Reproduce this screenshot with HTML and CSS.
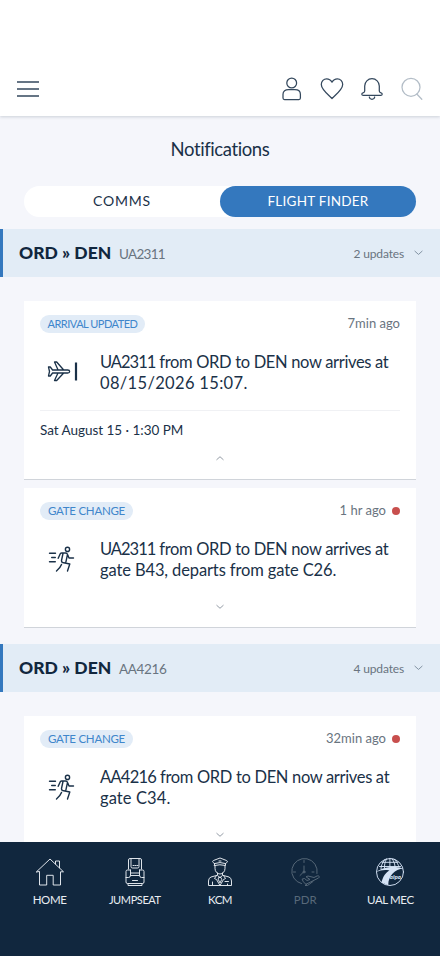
FILE: index.html
```html
<!DOCTYPE html>
<html lang="en">
<head>
<meta charset="utf-8">
<meta name="viewport" content="width=device-width, initial-scale=1">
<title>Notifications</title>
<link rel="stylesheet" href="styles.css">
</head>
<body>
<svg class="defs" width="0" height="0" aria-hidden="true">
  <symbol id="runner" viewBox="0 0 28 28">
    <circle cx="20.5" cy="4.4" r="2.1"/>
    <path d="M2.5 8.3h6M4.700 12.500h3.600M2.500 16.700h5.800M11.200 13.300 13.300 8.700Q13.800 8 14.700 8H18.500Q20 8 20.600 9.600L22 13H26.500M16 8.500 14.500 15.500Q14.300 17 15.600 17.500L22.800 19 20.500 26M20.400 10 18.700 17.800M14.500 19.500Q13.500 22.500 9.500 26"/>
  </symbol>
  <symbol id="down" viewBox="0 0 10 6"><path d="m1 1 4 3.600L9 1"/></symbol>
</svg>
<div class="app">
  <header class="topbar">
    <svg class="icon menu" width="24" height="24" viewBox="0 0 24 24"><path d="M1 5h22M1 12h22M1 19h22"/></svg>
    <div class="actions">
      <svg class="icon" width="24" height="24" viewBox="0 0 24 24"><circle cx="11.700" cy="6" r="4.900"/><path d="M3 21v-3.700c0-3.300 2.400-4.800 5.500-4.800h6.400c3.100 0 5.500 1.500 5.500 4.800V21q0 1.500-1.500 1.500H4.500Q3 22.500 3 21Z"/></svg>
      <svg class="icon" width="24" height="24" viewBox="0 0 24 24"><path d="M12 21.500C8 17.500 1.300 12.500 1.300 7.500c0-3.300 2.500-5.700 5.300-5.700 2.500 0 4.300 1.400 5.400 3.400 1.100-2 2.900-3.400 5.400-3.400 2.800 0 5.300 2.400 5.300 5.700 0 5-6.700 10-10.700 14Z"/></svg>
      <svg class="icon" width="24" height="24" viewBox="0 0 24 24"><path d="M4.700 9a7.300 7.300 0 0 1 14.600 0v5q0 1.500 1.700 1.800c1.700.4 1.500 2.500-.2 2.500H3.200c-1.700 0-1.900-2.100-.2-2.500Q4.700 15.500 4.700 14ZM9.300 20c.5 3 4.900 3 5.400 0"/></svg>
      <svg class="icon muted" width="24" height="24" viewBox="0 0 24 24"><circle cx="11" cy="10.300" r="9"/><path d="m16.800 17 5 5.300"/></svg>
    </div>
  </header>
  <main>
    <h1>Notifications</h1>
    <div class="tabs"><span class="tab comms">COMMS</span><span class="tab active">FLIGHT FINDER</span></div>

    <section>
      <div class="group"><strong>ORD » DEN</strong><span class="flight">UA2311</span><span class="count">2 updates</span><svg class="chev" width="9" height="6"><use href="#down"/></svg></div>
      <div class="cards">
        <article class="card open">
          <div class="meta"><span class="tag arrival">ARRIVAL UPDATED</span><span class="time first">7min ago</span></div>
          <div class="content">
            <svg class="event" width="32" height="28" viewBox="0 0 32 28"><path d="M2.500 10h1.800l2.300 3h5.500L8.500 5h2.200l7 8h4c2.600 0 2.600 3 0 3h-4l-7 7.500H8.500L12 16H6.600l-2.300 3H2.500l1-4.500ZM12 13h5.700M12 16h5.700"/><path class="bar" d="M30 5.500v18"/></svg>
            <p><span class="l1"><span class="ua">UA2311</span> from ORD to DEN now arrives at</span><br><span class="l2">08/15/2026 15:07.</span></p>
          </div>
          <div class="date"><span>Sat August 15 · 1:30 PM</span></div>
          <svg class="toggle up" width="8" height="6"><use href="#down"/></svg>
        </article>
        <article class="card closed">
          <div class="meta"><span class="tag">GATE CHANGE</span><span class="time">1 hr ago</span><i class="dot"></i></div>
          <div class="content">
            <svg class="event run" width="28" height="28"><use href="#runner"/></svg>
            <p><span class="l1"><span class="ua">UA2311</span> from ORD to DEN now arrives at</span><br><span class="l3">gate B43, departs from gate C26.</span></p>
          </div>
          <svg class="toggle" width="8" height="6"><use href="#down"/></svg>
        </article>
      </div>
    </section>

    <section>
      <div class="group"><strong>ORD » DEN</strong><span class="flight aa-flight">AA4216</span><span class="count">4 updates</span><svg class="chev" width="9" height="6"><use href="#down"/></svg></div>
      <div class="cards">
        <article class="card closed">
          <div class="meta"><span class="tag">GATE CHANGE</span><span class="time">32min ago</span><i class="dot"></i></div>
          <div class="content">
            <svg class="event run" width="28" height="28"><use href="#runner"/></svg>
            <p><span class="l1"><span class="aa">AA4216</span> from ORD to DEN now arrives at</span><br><span class="l4">gate C34.</span></p>
          </div>
          <svg class="toggle" width="8" height="6"><use href="#down"/></svg>
        </article>
      </div>
    </section>
  </main>
  <nav class="bottom">
    <div class="item">
      <svg width="30" height="30" viewBox="0 0 30 30"><path d="M1.500 14.800 15 2l13.500 12.800h-3V28h-7.300V18.300h-6.500V28H4.500V14.800ZM20.500 7V4h4v6.800"/></svg>
      <span class="home">HOME</span>
    </div>
    <div class="item">
      <svg width="30" height="30" viewBox="0 0 30 30"><path d="M8.500 12V3q0-1.500 1.500-1.500h10q1.500 0 1.500 1.500v9M11 2v7.500q0 1.500 1.500 1.500h5q1.500 0 1.500-1.500V2M13 8.500h1m1 0h1m1 0h1M10.500 13v5.500h9V13M10.500 16h9M10.500 13H7.500Q6 13 6 14.500V25q0 1.500 1.500 1.500h15q1.500 0 1.500-1.500V14.500Q24 13 22.500 13h-3M12.500 23.500h5M8 26.500v2h14v-2M6 20.500h2.500q2 0 2-2M24 20.500h-2.500q-2 0-2-2"/></svg>
      <span class="jump">JUMPSEAT</span>
    </div>
    <div class="item">
      <svg width="30" height="30" viewBox="0 0 30 30"><path d="M9.500 6.500C7.500 5.500 7 4 8.500 3.500L15 1l6.500 2.500c1.500.5 1 2-1 3v2q-5.500-1.500-11 0ZM9.500 6.500q5.500-2 11 0M14 4h2M10 8.500v3c0 3 2.300 5.500 5 5.500s5-2.500 5-5.500v-3M12.500 16v2.500L15 20.500l2.500-2V16M11.500 18.500 6 20q-2.500 1-2.500 4v4.500h23V24q0-3-2.500-4l-5.500-1.500M11.500 18.500l-2 3 2 1L15 28.500l3.500-6 2-1-2-3M14 20.500h2l.7 2L15 26l-1.700-3.500ZM20 24.500h3.500M7.500 25v3m15-1v1"/></svg>
      <span class="kcm">KCM</span>
    </div>
    <div class="item disabled">
      <svg width="30" height="30" viewBox="0 0 30 30"><path d="M11.500 26.600A12.700 12.700 0 1 1 27 16.500M14 3.500v2M3.500 15h2M22 15h2M14 9v5.500l-4 4"/><circle cx="14" cy="15" r="1"/><path d="m12.500 22 2-.5 2.500 2 3-1-4-2.700 2-.8 6 1.500 3-1.500c2-.8 3.200 1 1.500 2L16 27.300 13.500 25ZM17 27l-2 1.500h2.500l5.500-4"/></svg>
      <span class="pdr">PDR</span>
    </div>
    <div class="item">
      <svg class="globe" width="30" height="30" viewBox="0 0 30 30"><path d="M4.500 9.500h21M7 5.300h16M10 2.500C7 6 6 9 6 12M14.900 1.300V10M19 2c3 3 4.500 6 5 8M11.500 1.800C9.500 6 9.500 8 9.500 11M17 1.500c2 3 3 6 3 8"/><circle cx="15" cy="15" r="13.500"/><path class="fill" d="M1.500 15C7 10.500 18 8.500 28.300 11.500 20 12.500 13.500 18 13.200 28.200L6.500 25.500C8 19 11 15.500 14.500 13.500 9 12.500 5 13.500 1.500 15Z"/><text x="14.800" y="21.500">alpa</text></svg>
      <span class="ual">UAL MEC</span>
    </div>
  </nav>
</div>
</body>
</html>
```
FILE: styles.css
```css
* { box-sizing: border-box; }
body {
  margin: 0;
  background: #f5f6fb;
  color: #1a3148;
  font-family: Lato, sans-serif;
}
.defs { display: block; height: 0; }
svg { fill: none; stroke: currentColor; stroke-linecap: round; stroke-linejoin: round; flex: none; }
.app { height: 956px; display: flex; flex-direction: column; overflow: hidden; }
.topbar {
  height: 116px;
  flex: none;
  padding: 61px 16px 0;
  background: #fff;
  box-shadow: 0 1px 3px #11273e2e;
  display: flex;
  align-items: center;
  justify-content: space-between;
  z-index: 1;
}
.icon { stroke-width: 1.25; color: #34485d; }
.menu { stroke-width: 1.4; stroke-linecap: butt; }
.actions { display: flex; gap: 16px; }
.muted { color: #b3bdc7; }
main { flex: 1; min-height: 0; overflow: hidden; }
h1 {
  margin: 0;
  padding-top: 20px;
  height: 70px;
  text-align: center;
  font-size: 18.500px;
  line-height: 26px;
  font-weight: 400;
  letter-spacing: -.4px;
}
.tabs {
  height: 31px;
  margin: 0 24px 12px;
  display: flex;
  background: #fff;
  border-radius: 16px;
}
.tab { flex: 1; text-align: center; font-size: 14px; line-height: 30px; letter-spacing: .8px; }
.active { background: #3478be; color: #fff; border-radius: 16px; font-size: 13.500px; letter-spacing: .25px; }
.group {
  height: 48px;
  display: flex;
  align-items: center;
  padding: 0 17px 0 16px;
  border-left: 3px solid #3478be;
  background: #e2ecf6;
}
.group strong { font-size: 17.500px; line-height: 20px; font-weight: 900; width: 100px; padding-bottom: 1px; white-space: nowrap; color: #11273e; }
.flight { font-size: 13.500px; letter-spacing: -.7px; color: #697480; padding-top: 1px; }
.aa-flight { letter-spacing: -.35px; }
.count { margin-left: auto; font-size: 12px; letter-spacing: -.15px; color: #697480; }
.chev { margin-left: 10px; color: #78899a; }
.cards { display: flex; flex-direction: column; gap: 8px; padding: 24px 24px 16px; }
.card {
  padding: 14px 16px 0;
  background: #fff;
  border-bottom: 1px solid #d0d4da;
  display: flex;
  flex-direction: column;
}
.open { height: 179px; }
.closed { height: 140px; }
.meta { display: flex; align-items: center; height: 18px; }
.tag {
  height: 18px;
  width: 93px;
  text-align: center;
  border-radius: 9px;
  background: #e2ecf7;
  color: #4086cb;
  font-size: 11.500px;
  letter-spacing: -.25px;
  line-height: 18px;
  white-space: nowrap;
}
.arrival { width: 105px; font-size: 11px; letter-spacing: -.5px; }
.time { margin-left: auto; font-size: 13px; line-height: 16px; padding-bottom: 2px; color: #697480; }
.dot { width: 8px; height: 8px; margin-left: 6px; border-radius: 50%; background: #c84f4d; }
.content { height: 77px; display: flex; padding-top: 18px; }
.event { margin: 6px 0 0 6px; width: 32px; stroke-width: 1.3; }
.bar { stroke-width: 2.2; stroke-linecap: butt; }
.run { width: 28px; margin: 7px 3px 0 7px; stroke-width: 1.4; }
.content p { margin: 1px 0 0 22px; font-size: 16.500px; line-height: 21px; white-space: nowrap; }
.l1 { letter-spacing: -.33px; }
.ua { letter-spacing: -1px; }
.aa { letter-spacing: -.75px; }
.l2 { letter-spacing: .33px; }
.l3 { letter-spacing: -.12px; }
.l4 { letter-spacing: .1px; }
.date { height: 40px; border-top: 1px solid #f0f1f4; font-size: 13.500px; letter-spacing: -.03px; line-height: 38px; }
.toggle { margin: 8px auto 0; width: 8px; color: #78838f; }
.closed .toggle { margin-top: 7px; }
.up { margin-top: 5px; transform: rotate(180deg); }
.bottom {
  height: 114px;
  flex: none;
  display: flex;
  padding: 15px 7px 0;
  background: #11273e;
  color: #e9edf2;
}
.item {
  flex: 1;
  display: flex;
  flex-direction: column;
  align-items: center;
  font-size: 11.500px;
  line-height: 16px;
  white-space: nowrap;
}
.item svg { stroke-width: .95; }
.item span { margin-top: 5px; }
.home { letter-spacing: -.4px; }
.jump { font-size: 11px; letter-spacing: -.4px; }
.kcm { letter-spacing: -.5px; }
.ual { letter-spacing: -.4px; }
.disabled { color: #586979; }
.globe { color: #d5e3f5; }
.fill { fill: currentColor; stroke: none; }
.globe text { font: italic 900 6px Lato, sans-serif; letter-spacing: 0; fill: currentColor; stroke: none; }
```
